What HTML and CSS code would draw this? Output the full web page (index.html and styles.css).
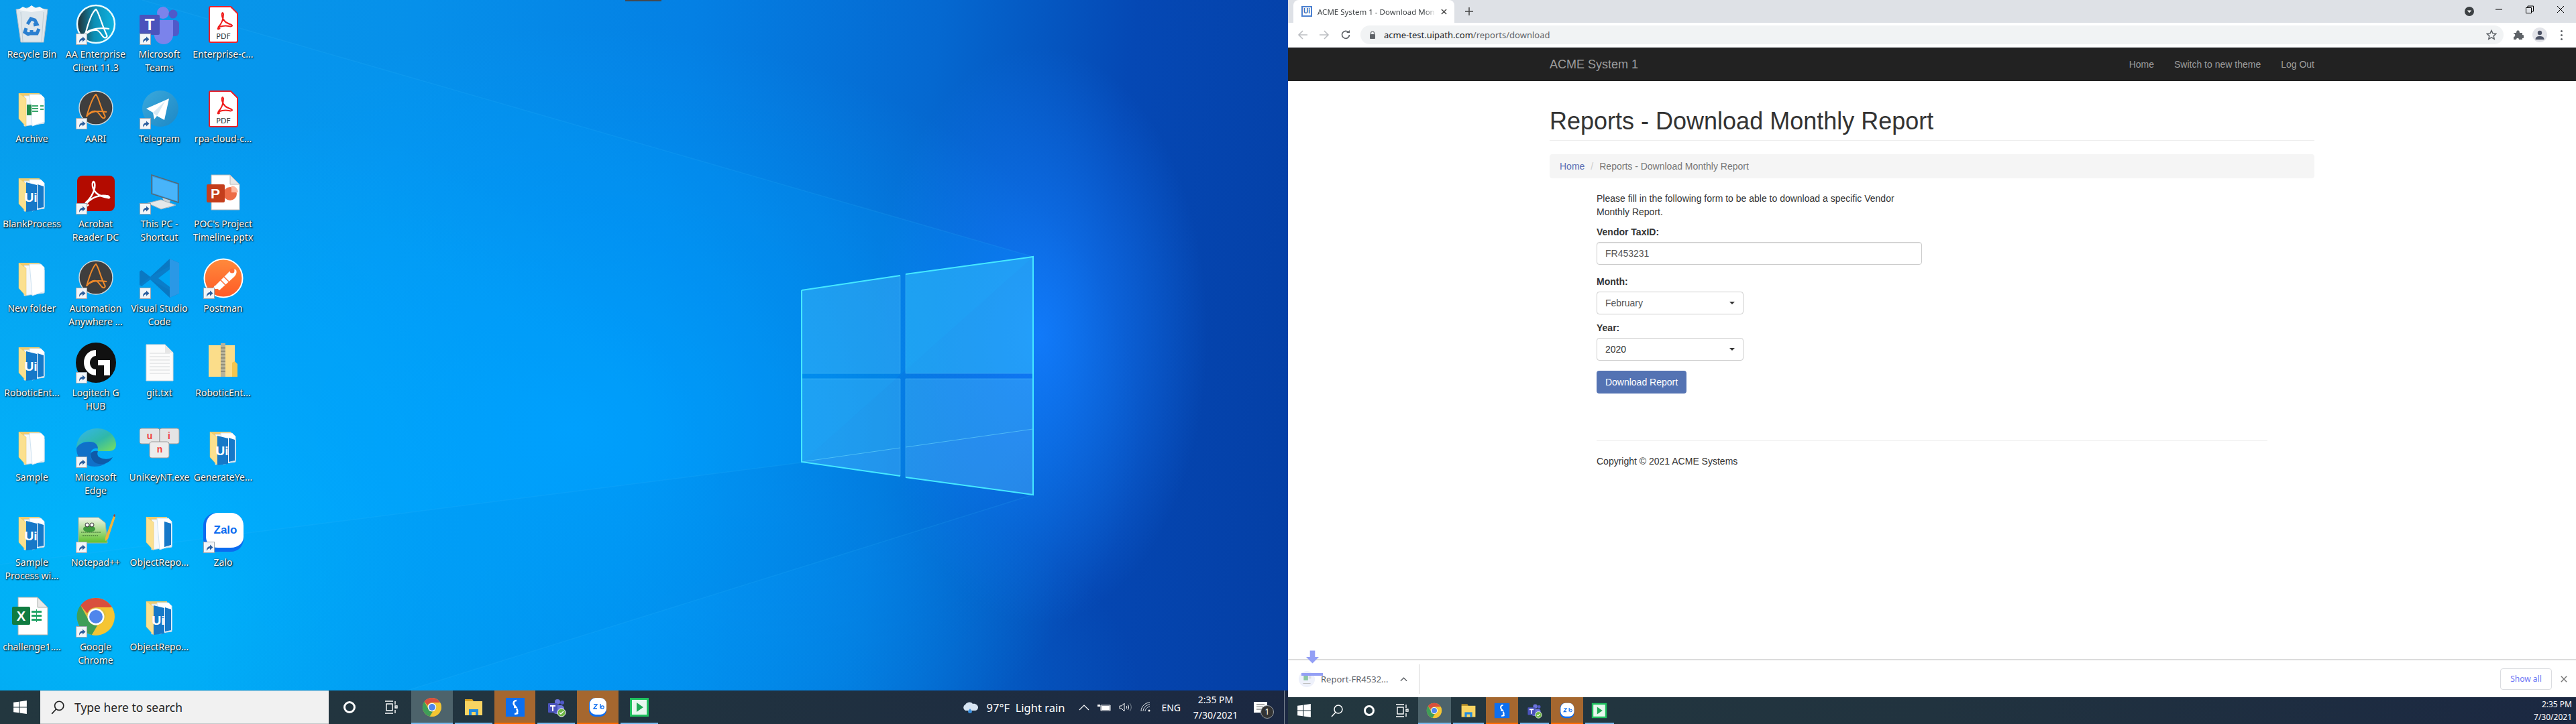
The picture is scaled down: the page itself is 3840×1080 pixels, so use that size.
FILE: index.html
```html
<!DOCTYPE html>
<html lang="en">

<head>
    <meta charset="UTF-8">
    <meta name="viewport" content="width=device-width, initial-scale=1.0">
    <link rel="stylesheet" href="styles.css">
    <title>ACME System 1 - Download Monthly Report</title>
</head>

<body>
    <!-- icon sheet -->
    <svg class="sheet" xmlns="http://www.w3.org/2000/svg">
        <defs>
            <linearGradient id="gAA" x1="0" x2="1" y1="0" y2="0">
                <stop offset="0" stop-color="#222c30" />
                <stop offset=".45" stop-color="#0d8eb4" />
                <stop offset="1" stop-color="#0db4e4" />
            </linearGradient>
            <linearGradient id="gTg" x1="0" x2="1" y1="0" y2="1">
                <stop offset="0" stop-color="#3aa9dd" />
                <stop offset="1" stop-color="#1e88c4" />
            </linearGradient>
            <linearGradient id="gPm" x1="0" x2="0" y1="0" y2="1">
                <stop offset="0" stop-color="#ff8a3c" />
                <stop offset="1" stop-color="#ff5a26" />
            </linearGradient>
            <linearGradient id="gEdge" x1="0" x2="1" y1="0" y2="1">
                <stop offset="0" stop-color="#35b6ef" />
                <stop offset=".55" stop-color="#2fb8a8" />
                <stop offset="1" stop-color="#7be05c" />
            </linearGradient>
            <linearGradient id="gNpp" x1="0" x2="0" y1="0" y2="1">
                <stop offset="0" stop-color="#f2f5e8" />
                <stop offset="1" stop-color="#5cc02c" />
            </linearGradient>
        </defs>

        <symbol id="shortcut" viewBox="0 0 17 17">
            <rect x=".5" y=".5" width="16" height="16" fill="#f2f5f8" stroke="#9aa6b0" />
            <path d="M5 14c0-5 2-7 5-7V4.500l4.500 4-4.500 4V10c-2 0-3.500 1-5 4z" fill="#2d5f9e" />
        </symbol>

        <symbol id="recycle" viewBox="0 0 60 60">
            <path d="M6 8l23-3 24 3-6 49H13z" fill="#dde6ec" stroke="#aebcc6" />
            <path d="M9 9l7-5 6 3 7-5 6 4 6-2 8 5-20 3z" fill="#f6f8f9" />
            <path d="M13 12l3 44M47 12l-3 44" stroke="#bfccd4" />
            <path d="M23 30l5-8 6 2 3 6-5 1M40 37l-3 7-8 0 0-5M21 36l-2 6 5 3 3-1" fill="none" stroke="#2a7fd0" stroke-width="5" />
        </symbol>

        <symbol id="aa" viewBox="0 0 60 60">
            <circle cx="30" cy="30" r="28" fill="url(#gAA)" stroke="#e8fbff" stroke-width="2.500" />
            <path d="M14 46C18 30 24 12 30 8c4 3 9 24 16 38 2 3-2 6-5 3-4-4-5-9-10-10-6-1-12 2-17 7zM12 45c10-9 26-10 38-8" fill="none" stroke="#fff" stroke-width="2.200" />
        </symbol>
        <symbol id="aari" viewBox="0 0 60 60">
            <circle cx="30" cy="29" r="25" fill="#3e3e3e" stroke="#cfd6d8" stroke-width="1.500" />
            <path d="M16 42C20 28 25 13 30 9c4 4 7 20 13 31 2 3-1 6-4 3-4-4-5-8-9-9-5-1-10 2-14 8zM16 41c8-8 18-8 30-6" fill="none" stroke="#f08a2a" stroke-width="2" />
        </symbol>
        <symbol id="teams" viewBox="0 0 60 60">
            <circle cx="35" cy="13" r="9" fill="#7b83eb" />
            <circle cx="50" cy="15" r="6.500" fill="#5059c9" />
            <rect x="43" y="24" width="16" height="24" rx="6" fill="#5059c9" />
            <path d="M22 24h28v22a14 14 0 0 1-28 0z" fill="#7b83eb" />
            <rect x="0" y="16" width="30" height="30" rx="2" fill="#4b53bc" />
        </symbol>
        <symbol id="pdf" viewBox="0 0 60 60">
            <path d="M9 6a2 2 0 0 1 2-2h30l10 10v41a2 2 0 0 1-2 2H11a2 2 0 0 1-2-2z" fill="#fff" stroke="#e8202a" stroke-width="2" />
            <path d="M22 35c6-6 8-14 8-20-1-4-3-1-2 3 2 8 6 10 14 13 3 2-1 3-4 2-6-1-14 0-16 3-1 2 1 2 3 0" fill="none" stroke="#f01c1c" stroke-width="2" />
        </symbol>
        <symbol id="folder" viewBox="0 0 60 60">
            <rect x="10" y="7" width="31" height="9" fill="#efcb6c" />
            <path d="M18 11h22l8 7v34l-30 4z" fill="#f5f8fb" stroke="#cfdbe4" />
            <path d="M26 9l17 0 5 5v36l-18 6z" fill="#fff" stroke="#cfe3f2" />
            <path d="M10 7l11 8v42L10 45z" fill="#fbe08e" stroke="#e8c25e" stroke-width=".5" />
        </symbol>
        <symbol id="folder-xl" viewBox="0 0 60 60">
            <use href="#folder" width="60" height="60" />
            <rect x="22" y="24" width="7" height="16" fill="#1f8a4c" />
            <path d="M30 26h9M30 30h9M30 34h9M42 26h5M42 31h5" stroke="#3aa76d" stroke-width="2" />
        </symbol>
        <symbol id="folder-ui" viewBox="0 0 60 60">
            <use href="#folder" width="60" height="60" />
            <path d="M21 13l16 4v38l-16 2z" fill="#1678c8" />
            <path d="M38 16l9 3v31l-9 2z" fill="#1678c8" />
        </symbol>
        <symbol id="folder-ob" viewBox="0 0 60 60">
            <use href="#folder" width="60" height="60" />
            <path d="M37 14l10 3v32l-10 3z" fill="#1678c8" />
        </symbol>
        <symbol id="acrobat" viewBox="0 0 60 60">
            <rect x="2" y="3" width="56" height="53" rx="8" fill="#b30b00" />
            <path d="M14 44c10-8 16-22 14-30-2-5-4 0-3 5 2 9 9 15 23 17 4 1 2-3-3-3-9-1-19 2-26 8-6 6-3 9 0 5" fill="none" stroke="#fff" stroke-width="2.500" />
        </symbol>
        <symbol id="pc" viewBox="0 0 60 60">
            <path d="M18 2l40 13v28L18 30z" fill="#2ea0ec" stroke="#5b6770" stroke-width="1.500" />
            <path d="M20 5l36 11v25L20 29z" fill="#48b4fa" />
            <path d="M34 36l12 4-2 6 8 2-10 3-12-4 8-2z" fill="#c8d2d8" />
            <path d="M12 44l20-5 22 8-22 6z" fill="#e4e8ea" stroke="#aab4ba" />
        </symbol>
        <symbol id="pptx" viewBox="0 0 60 60">
            <path d="M12 2h28l14 14v38H12z" fill="#fff" stroke="#b8b8b8" />
            <path d="M40 2v14h14z" fill="#e8e8e8" stroke="#b8b8b8" />
            <circle cx="40" cy="30" r="10" fill="#ed6c47" />
            <path d="M42 18a10 10 0 0 1 10 10H42z" fill="#ffb8a0" />
            <rect x="5" y="16" width="27" height="27" rx="2" fill="#c43e1c" />
        </symbol>
        <symbol id="vscode" viewBox="0 0 60 60">
            <path d="M45 1L16 28 3 18 0 20v20l3 2 13-10 29 27 14-6V7z" fill="#0a78c2" />
            <path d="M45 1l14 6v46l-14 6z" fill="#2a98e6" />
            <path d="M16 28l29-16v36L16 32 3 42 0 40z" fill="#0a84d4" opacity=".4" />
            <path d="M28 30l17-13v26z" fill="#00a4f4" />
        </symbol>
        <symbol id="postman" viewBox="0 0 60 60">
            <circle cx="30" cy="30" r="28.500" fill="url(#gPm)" stroke="#fff" stroke-width="2" />
            <path d="M17 42l22-22c4-4 9-4 10-2s1 6-3 10L24 48z" fill="#fff" />
            <path d="M14 46l3-5 5 5z" fill="#fff" />
            <path d="M25 32l8 8M30 27l8 8" stroke="#ff6c37" stroke-width="1.500" />
            <circle cx="43" cy="19" r="3.500" fill="#ff6c37" />
        </symbol>
        <symbol id="logitech" viewBox="0 0 60 60">
            <circle cx="30" cy="30" r="30" fill="#111" />
            <path d="M30 11C19 11 12 20 12 30s8 19 18 19v-9c-6 0-9-5-9-10s4-10 9-10z" fill="#fff" />
            <path d="M33 26h18v23h-9V34h-9z" fill="#fff" />
        </symbol>
        <symbol id="txt" viewBox="0 0 60 60">
            <path d="M10 3h28l12 12v42H10z" fill="#fbfbfb" stroke="#d8d8d8" />
            <path d="M38 3v12h12z" fill="#e6e6e6" />
            <path d="M15 16h30M15 21h30M15 26h30M15 31h30M15 36h30M15 41h30M15 46h30" stroke="#d8dadc" stroke-width="1.200" />
        </symbol>
        <symbol id="zip" viewBox="0 0 60 60">
            <rect x="8" y="4" width="39" height="47" fill="#fbdd8a" />
            <path d="M47 28l4 4v19h-8V30z" fill="#f3c64f" />
            <rect x="26" y="1" width="7" height="50" fill="#b8b39a" />
            <path d="M26 8h7M26 13h7M26 18h7M26 23h7M26 28h7M26 33h7M26 38h7M26 43h7" stroke="#6f6c5c" />
        </symbol>
        <symbol id="edge" viewBox="0 0 60 60">
            <path d="M1 32C1 14 15 2 32 2c16 0 28 11 28 24 0 8-6 10-12 10H33c0-7-3-12-12-14C13 21 5 24 1 32z" fill="url(#gEdge)" />
            <path d="M1 32c0 15 12 27 27 27 9 0 14-3 17-5-16 3-25-6-23-14 1-8 7-9 11-8 0-4-3-10-12-10C12 22 4 25 1 32z" fill="#1070c8" />
            <path d="M22 40c-1 10 10 19 23 14 5-2 8-5 10-9-7 4-13 3-18 1-6-2-5-8-4-10-6-1-10 1-11 4z" fill="#0f5aa8" />
        </symbol>
        <symbol id="unikey" viewBox="0 0 60 60">
            <rect x="0" y="2" width="30" height="23" rx="3" fill="#e4e4e4" stroke="#9a9a9a" />
            <rect x="30" y="2" width="29" height="23" rx="3" fill="#e4e4e4" stroke="#9a9a9a" />
            <rect x="15" y="22" width="29" height="24" rx="3" fill="#ececec" stroke="#9a9a9a" />
        </symbol>
        <symbol id="npp" viewBox="0 0 60 60">
            <path d="M4 8h30l10 8 3 30-43 0z" fill="url(#gNpp)" stroke="#a8b4a0" />
            <path d="M44 38L56 6l3 1-11 33-4 3z" fill="#f0b43c" />
            <path d="M56 6l1-3 2 1-1 3z" fill="#b04030" />
            <ellipse cx="20" cy="25" rx="9" ry="5" fill="#3f9a3c" />
            <circle cx="17" cy="19" r="3" fill="#fff" stroke="#333" />
            <circle cx="24" cy="19" r="3" fill="#fff" stroke="#333" />
            <path d="M8 30h30M10 35h24" stroke="#2e5d2a" stroke-dasharray="2 1" />
        </symbol>
        <symbol id="zalo" viewBox="0 0 60 60">
            <path d="M20 1h21c11 0 19 8 19 19v20c0 11-8 19-19 19H20C9 59 0 50 0 40V20C0 9 9 1 20 1z" fill="#0b6cf0" />
            <path d="M22 1h19c11 0 19 8 19 19v17c0 9-8 16-19 16H22C12 53 4 46 4 37V20C4 9 12 1 22 1z" fill="#fff" />
        </symbol>
        <symbol id="excel" viewBox="0 0 60 60">
            <path d="M9 1h29l15 15v41H9z" fill="#fff" stroke="#aab0ac" />
            <path d="M38 1v15h15z" fill="#e8e8e8" stroke="#aab0ac" />
            <rect x="0" y="15" width="27" height="27" rx="2" fill="#107c41" />
            <path d="M29 21h15v3H29zM29 27h15v3H29zM29 33h15v3H29zM36 19h1v19h-1z" fill="#21a366" />
        </symbol>
        <symbol id="chrome" viewBox="0 0 60 60">
            <circle cx="30" cy="30" r="28" fill="#e0c03f" />
            <path d="M30 2a28 28 0 0 1 24 14H30a14 14 0 0 0-13 9L7 13A28 28 0 0 1 30 2z" fill="#d94f3d" />
            <path d="M7 13l11 20a13 13 0 0 0 14 10l-8 14A28 28 0 0 1 7 13z" fill="#3f9e58" />
            <path d="M54 16a28 28 0 0 1-30 41l10-15 a14 14 0 0 0 8-22 l-12-4z" fill="#f5c533" />
            <circle cx="30" cy="30" r="12.500" fill="#fff" />
            <circle cx="30" cy="30" r="10" fill="#4f86ec" />
        </symbol>
        <symbol id="explorer" viewBox="0 0 30 30">
            <path d="M2 3h11l2 3H2z" fill="#d9a21e" />
            <rect x="2" y="6" width="26" height="21" fill="#f8d462" />
            <rect x="8" y="18" width="14" height="9" fill="#1f8ae0" />
            <rect x="12" y="22" width="6" height="5" fill="#f8d462" />
        </symbol>
        <symbol id="sapp" viewBox="0 0 30 30">
            <rect x="1" y="1" width="28" height="28" fill="#0c6ff0" />
            <path d="M17 5c-4 0-5 3-4 6l3 4-3 0M14 25c4 0 5-3 4-6l-1-2" fill="none" stroke="#fff" stroke-width="2.600" />
            <circle cx="18" cy="24" r="1.600" fill="#fff" />
        </symbol>
        <symbol id="teams-bar" viewBox="0 0 30 30">
            <circle cx="17" cy="7" r="4" fill="#6d75dc" />
            <circle cx="24" cy="8" r="3" fill="#5059c9" />
            <rect x="10" y="12" width="17" height="13" rx="5" fill="#6d75dc" />
            <rect x="3" y="9" width="14" height="14" rx="1" fill="#4b53bc" />
            <path d="M6 12h8v2h-3v7H9v-7H6z" fill="#fff" />
            <circle cx="23" cy="23" r="6" fill="#6eb544" stroke="#fff" />
            <path d="M20 23l2 2 4-4" fill="none" stroke="#fff" stroke-width="1.400" />
        </symbol>
        <symbol id="zalo-bar" viewBox="0 0 30 30">
            <rect x="2" y="1" width="26" height="28" rx="9" fill="#0b6cf0" />
            <rect x="3" y="1" width="25" height="25" rx="9" fill="#fff" />
            <path d="M9 11h5l-5 6h5M19 10v7" fill="none" stroke="#0b6cf0" stroke-width="1.400" />
            <circle cx="22" cy="15" r="2.200" fill="none" stroke="#0b6cf0" stroke-width="1.200" />
        </symbol>
        <symbol id="player" viewBox="0 0 30 30">
            <rect x="1" y="1" width="28" height="28" fill="#1fc05e" />
            <rect x="4" y="4" width="22" height="22" fill="#e8f7ee" />
            <path d="M11 8l10 7-10 7z" fill="#1fa854" />
        </symbol>
        <symbol id="winlogo" viewBox="0 0 20 20">
            <path d="M1 3.500l7.500-1v7H1zM9.500 2.300L19 1v8.500H9.500zM1 10.500h7.500v7l-7.500-1zM9.500 10.500H19V19l-9.500-1.300z" fill="#fff" />
        </symbol>
        <symbol id="lens" viewBox="0 0 20 20">
            <circle cx="12" cy="8" r="6" fill="none" stroke="currentColor" stroke-width="1.500" />
            <path d="M8 12.500L2 19" stroke="currentColor" stroke-width="1.500" />
        </symbol>
        <symbol id="taskview" viewBox="0 0 20 20">
            <path d="M1 1h12M1 19h12M3 5h9v10H3zM16 1v5M16 8h3v3h-3zM16 14v5" fill="none" stroke="#fff" stroke-width="1.400" />
        </symbol>
    </svg>

    <div class="screen">
        <!-- left monitor -->
        <section class="desktop">
            <svg class="wall" viewBox="0 0 1920 1030" preserveAspectRatio="none">
                <polygon class="beam-up" points="1540,383 212,0 0,0 0,842 1195,690" />
                <polygon class="beam-floor" points="1195,690 0,842 0,1030 607,1030 1540,738" />
                <polyline class="beam-line" points="1540,383 212,0" />
                <polyline class="beam-line" points="1195,690 0,842" />
                <polyline class="beam-line" points="1540,738 607,1030" />
                <polygon class="pane" points="1195,433 1342,411 1342,557 1195,557" />
                <polygon class="pane pane-lit" points="1350,409 1540,383 1540,557 1350,557" />
                <polygon class="pane" points="1195,565 1342,565 1342,710 1195,689" />
                <polygon class="pane" points="1350,565 1540,565 1540,738 1350,712" />
                <polygon class="pane-low" points="1195,689 1342,668 1342,710" />
                <polygon class="pane-low" points="1350,667 1540,640 1540,738 1350,712" />
                <polyline class="pane-shine" points="1195,689 1342,668" />
                <polyline class="pane-shine" points="1350,667 1540,640" />
                <path class="pane-edge" d="M1195,433V689L1342,710M1195,433L1342,411M1350,409L1540,383V738L1350,712" />
            </svg>
            <div class="top-notch"></div>

            <div class="icons">
                <div class="item"><span class="icon"><svg viewBox="0 0 60 60"><use href="#recycle" /></svg></span><span class="label">Recycle Bin</span></div>
                <div class="item"><span class="icon"><svg viewBox="0 0 60 60"><use href="#aa" /></svg><svg class="sc"><use href="#shortcut" /></svg></span><span class="label">AA Enterprise<br>Client 11.3</span></div>
                <div class="item"><span class="icon"><svg viewBox="0 0 60 60"><use href="#teams" /><text class="svg-bold" x="15" y="39" font-size="24" text-anchor="middle" fill="#fff">T</text></svg><svg class="sc"><use href="#shortcut" /></svg></span><span class="label">Microsoft<br>Teams</span></div>
                <div class="item"><span class="icon"><svg viewBox="0 0 60 60"><use href="#pdf" /><text class="svg-mono" x="30" y="52" font-size="11" text-anchor="middle" fill="#333">PDF</text></svg></span><span class="label">Enterprise-c...</span></div>

                <div class="item"><span class="icon"><svg viewBox="0 0 60 60"><use href="#folder-xl" /></svg></span><span class="label">Archive</span></div>
                <div class="item"><span class="icon"><svg viewBox="0 0 60 60"><use href="#aari" /></svg><svg class="sc"><use href="#shortcut" /></svg></span><span class="label">AARI</span></div>
                <div class="item"><span class="icon"><svg viewBox="0 0 60 60"><circle cx="31" cy="30" r="27" fill="url(#gTg)" /><path d="M10 30l34-15-7 32-11-6-4 5-2-10z" fill="#fff" /><path d="M20 36l18-17-12 22z" fill="#d4e8f4" /></svg><svg class="sc"><use href="#shortcut" /></svg></span><span class="label">Telegram</span></div>
                <div class="item"><span class="icon"><svg viewBox="0 0 60 60"><use href="#pdf" /><text class="svg-mono" x="30" y="52" font-size="11" text-anchor="middle" fill="#333">PDF</text></svg></span><span class="label">rpa-cloud-c...</span></div>

                <div class="item"><span class="icon"><svg viewBox="0 0 60 60"><use href="#folder-ui" /><text class="svg-bold" x="28" y="42" font-size="19" text-anchor="middle" fill="#fff">Ui</text></svg></span><span class="label">BlankProcess</span></div>
                <div class="item"><span class="icon"><svg viewBox="0 0 60 60"><use href="#acrobat" /></svg><svg class="sc"><use href="#shortcut" /></svg></span><span class="label">Acrobat<br>Reader DC</span></div>
                <div class="item"><span class="icon"><svg viewBox="0 0 60 60"><use href="#pc" /></svg><svg class="sc"><use href="#shortcut" /></svg></span><span class="label">This PC -<br>Shortcut</span></div>
                <div class="item"><span class="icon"><svg viewBox="0 0 60 60"><use href="#pptx" /><text class="svg-bold" x="18" y="37" font-size="21" text-anchor="middle" fill="#fff">P</text></svg></span><span class="label">POC's Project<br>Timeline.pptx</span></div>

                <div class="item"><span class="icon"><svg viewBox="0 0 60 60"><use href="#folder" /></svg></span><span class="label">New folder</span></div>
                <div class="item"><span class="icon"><svg viewBox="0 0 60 60"><use href="#aari" /></svg><svg class="sc"><use href="#shortcut" /></svg></span><span class="label">Automation<br>Anywhere ...</span></div>
                <div class="item"><span class="icon"><svg viewBox="0 0 60 60"><use href="#vscode" /></svg><svg class="sc"><use href="#shortcut" /></svg></span><span class="label">Visual Studio<br>Code</span></div>
                <div class="item"><span class="icon"><svg viewBox="0 0 60 60"><use href="#postman" /></svg><svg class="sc"><use href="#shortcut" /></svg></span><span class="label">Postman</span></div>

                <div class="item"><span class="icon"><svg viewBox="0 0 60 60"><use href="#folder-ui" /><text class="svg-bold" x="28" y="42" font-size="19" text-anchor="middle" fill="#fff">Ui</text></svg></span><span class="label">RoboticEnt...</span></div>
                <div class="item"><span class="icon"><svg viewBox="0 0 60 60"><use href="#logitech" /></svg><svg class="sc"><use href="#shortcut" /></svg></span><span class="label">Logitech G<br>HUB</span></div>
                <div class="item"><span class="icon"><svg viewBox="0 0 60 60"><use href="#txt" /></svg></span><span class="label">git.txt</span></div>
                <div class="item"><span class="icon"><svg viewBox="0 0 60 60"><use href="#zip" /></svg></span><span class="label">RoboticEnt...</span></div>

                <div class="item"><span class="icon"><svg viewBox="0 0 60 60"><use href="#folder" /></svg></span><span class="label">Sample</span></div>
                <div class="item"><span class="icon"><svg viewBox="0 0 60 60"><use href="#edge" /></svg><svg class="sc"><use href="#shortcut" /></svg></span><span class="label">Microsoft<br>Edge</span></div>
                <div class="item"><span class="icon"><svg viewBox="0 0 60 60"><use href="#unikey" /><text class="svg-bold" x="15" y="18" font-size="14" text-anchor="middle" fill="#f04040">u</text><text class="svg-bold" x="44" y="18" font-size="14" text-anchor="middle" fill="#f04040">i</text><text class="svg-bold" x="30" y="38" font-size="14" text-anchor="middle" fill="#f04040">n</text></svg></span><span class="label">UniKeyNT.exe</span></div>
                <div class="item"><span class="icon"><svg viewBox="0 0 60 60"><use href="#folder-ui" /><text class="svg-bold" x="28" y="42" font-size="19" text-anchor="middle" fill="#fff">Ui</text></svg></span><span class="label">GenerateYe...</span></div>

                <div class="item"><span class="icon"><svg viewBox="0 0 60 60"><use href="#folder-ui" /><text class="svg-bold" x="28" y="42" font-size="19" text-anchor="middle" fill="#fff">Ui</text></svg></span><span class="label">Sample<br>Process wi...</span></div>
                <div class="item"><span class="icon"><svg viewBox="0 0 60 60"><use href="#npp" /></svg><svg class="sc"><use href="#shortcut" /></svg></span><span class="label">Notepad++</span></div>
                <div class="item"><span class="icon"><svg viewBox="0 0 60 60"><use href="#folder-ob" /></svg></span><span class="label">ObjectRepo...</span></div>
                <div class="item"><span class="icon"><svg viewBox="0 0 60 60"><use href="#zalo" /><text class="svg-bold" x="33" y="32" font-size="17" text-anchor="middle" fill="#0b6cf0">Zalo</text></svg><svg class="sc"><use href="#shortcut" /></svg></span><span class="label">Zalo</span></div>

                <div class="item"><span class="icon"><svg viewBox="0 0 60 60"><use href="#excel" /><text class="svg-bold" x="13.500" y="36" font-size="20" text-anchor="middle" fill="#fff">X</text></svg></span><span class="label">challenge1....</span></div>
                <div class="item"><span class="icon"><svg viewBox="0 0 60 60"><use href="#chrome" /></svg><svg class="sc"><use href="#shortcut" /></svg></span><span class="label">Google<br>Chrome</span></div>
                <div class="item"><span class="icon"><svg viewBox="0 0 60 60"><use href="#folder-ui" /><text class="svg-bold" x="28" y="42" font-size="19" text-anchor="middle" fill="#fff">Ui</text></svg></span><span class="label">ObjectRepo...</span></div>
            </div>

            <footer class="taskbar taskbar-big">
                <div class="tb-start"><svg class="tb-win"><use href="#winlogo" /></svg></div>
                <div class="search-box">
                    <svg class="search-lens"><use href="#lens" /></svg>
                    <span>Type here to search</span>
                </div>
                <div class="tb-cell"><span class="cortana"></span></div>
                <div class="tb-cell"><svg class="tb-small"><use href="#taskview" /></svg></div>
                <div class="tb-cell active open"><svg class="tb-app"><use href="#chrome" /></svg></div>
                <div class="tb-cell open"><svg class="tb-app"><use href="#explorer" /></svg></div>
                <div class="tb-cell flash"><svg class="tb-app"><use href="#sapp" /></svg></div>
                <div class="tb-cell open"><svg class="tb-app"><use href="#teams-bar" /></svg></div>
                <div class="tb-cell flash"><svg class="tb-app"><use href="#zalo-bar" /></svg></div>
                <div class="tb-cell open"><svg class="tb-app"><use href="#player" /></svg></div>

                <div class="tray">
                    <svg class="tray-cloud" viewBox="0 0 26 18"><path d="M6 14a5 5 0 0 1 0-9c2-4 9-5 11-1 4-1 8 2 8 5s-2 5-5 5z" fill="#d6e4f2" /><path d="M13 11l3 4a3 3 0 0 1-6 0z" fill="#3a8edc" /></svg>
                    <span class="weather">97°F&nbsp; Light rain</span>
                    <svg class="tray-ico caret-up" viewBox="0 0 16 10"><path d="M1 9l7-7 7 7" fill="none" stroke="#fff" stroke-width="1.200" /></svg>
                    <svg class="tray-ico" viewBox="0 0 20 12"><path d="M5 3h14v8H5z" fill="none" stroke="#fff" /><path d="M6 4h12v6H6zM0 2h4v3H0z" fill="#fff" /></svg>
                    <svg class="tray-ico" viewBox="0 0 20 14"><path d="M1 5h3l4-4v12l-4-4H1zM11 5c1 1 1 3 0 4M13 3c2 2 2 6 0 8" fill="none" stroke="#fff" /><path d="M16 1c3 3 3 9 0 12" fill="none" stroke="#7c8794" /></svg>
                    <svg class="tray-ico wifi" viewBox="0 0 16 16"><path d="M1 14C1 7 7 1 14 1M4 14c0-5 5-10 10-10M7 14c0-3 4-7 7-7" fill="none" stroke="#dfe4e8" /><circle cx="13" cy="13" r="1.500" fill="#fff" /></svg>
                    <span class="lang">ENG</span>
                    <div class="clock"><span>2:35 PM</span><span>7/30/2021</span></div>
                    <div class="notif">
                        <svg class="notif-lines" viewBox="0 0 20 16"><path d="M4 4h12M4 7.500h12M4 11h8" stroke="#555" /></svg>
                        <span class="notif-badge">1</span>
                    </div>
                    <span class="show-desktop"></span>
                </div>
            </footer>
        </section>

        <!-- right monitor: chrome -->
        <section class="browser">
            <div class="tabstrip">
                <div class="tab">
                    <span class="favicon">Ui</span>
                    <span class="tab-title">ACME System 1 - Download Mon</span>
                    <svg class="tab-close" viewBox="0 0 10 10"><path d="M1 1l8 8M9 1L1 9" stroke="#444" stroke-width="1.600" /></svg>
                </div>
                <svg class="new-tab" viewBox="0 0 12 12"><path d="M6 0v12M0 6h12" stroke="#444" stroke-width="1.500" /></svg>
                <div class="win-controls">
                    <svg class="tab-search" viewBox="0 0 14 14"><circle cx="7" cy="7" r="7" fill="#3c4043" /><path d="M3.800 5.500h6.400L7 9.300z" fill="#fff" /></svg>
                    <svg class="win-btn" viewBox="0 0 12 12"><path d="M1 6h10" stroke="#000" /></svg>
                    <svg class="win-btn" viewBox="0 0 12 12"><path d="M.5 3.500h8v8h-8zM3 3.500V1h8.500v8H8.500" fill="none" stroke="#000" /></svg>
                    <svg class="win-btn" viewBox="0 0 12 12"><path d="M1 1l10 10M11 1L1 11" stroke="#000" /></svg>
                </div>
            </div>

            <div class="toolbar">
                <svg class="tool tool-off" viewBox="0 0 16 16"><path d="M15 8H2M8 2L2 8l6 6" fill="none" stroke="currentColor" stroke-width="1.600" /></svg>
                <svg class="tool tool-off" viewBox="0 0 16 16"><path d="M1 8h13M8 2l6 6-6 6" fill="none" stroke="currentColor" stroke-width="1.600" /></svg>
                <svg class="tool" viewBox="0 0 16 16"><path d="M13.500 8A5.500 5.500 0 1 1 12 4" fill="none" stroke="currentColor" stroke-width="1.700" /><path d="M9 5h5V1z" fill="currentColor" /></svg>
                <div class="omnibox">
                    <svg class="lock" viewBox="0 0 10 12"><path d="M2.500 5V3.500a2.500 2.500 0 0 1 5 0V5" fill="none" stroke="#5f6368" stroke-width="1.200" /><rect x="1" y="5" width="8" height="7" rx="1" fill="#5f6368" /></svg>
                    <span class="url">acme-test.uipath.com<span class="url-path">/reports/download</span></span>
                    <svg class="star" viewBox="0 0 16 16"><path d="M8 1.500l2 4.400 4.700.5-3.500 3.200 1 4.700L8 11.900l-4.200 2.400 1-4.700L1.300 6.400 6 5.900z" fill="none" stroke="#5f6368" stroke-width="1.500" /></svg>
                </div>
                <svg class="tool ext" viewBox="0 0 16 16"><path d="M1 5h4c0-5 5-5 5 0h4v3c4 0 4 5 0 5v2H9c0-3-4-3-4 0H1v-4c3 0 3-5 0-5z" fill="#5f6368" /></svg>
                <div class="avatar"><svg viewBox="0 0 16 16"><circle cx="8" cy="5" r="3.200" fill="#4d5365" /><path d="M1.500 15c0-4 3-5 6.500-5s6.500 1 6.500 5z" fill="#4d5365" /></svg></div>
                <div class="kebab"><span></span><span></span><span></span></div>
            </div>

            <div class="page">
                <nav class="navbar">
                    <div class="container nav-row">
                        <span class="brand">ACME System 1</span>
                        <div class="nav-links">
                            <a>Home</a>
                            <a>Switch to new theme</a>
                            <a>Log Out</a>
                        </div>
                    </div>
                </nav>
                <main class="container">
                    <h1 class="page-header">Reports - Download Monthly Report</h1>
                    <div class="breadcrumb"><a>Home</a><span class="crumb-sep">/</span><span>Reports - Download Monthly Report</span></div>
                    <div class="form-area">
                        <div class="form-col">
                            <p class="intro">Please fill in the following form to be able to download a specific Vendor Monthly Report.</p>
                            <label>Vendor TaxID:</label>
                            <div class="field field-text">FR453231</div>
                            <label>Month:</label>
                            <div class="field field-select tight">February<span class="caret"></span></div>
                            <label>Year:</label>
                            <div class="field field-select year">2020<span class="caret"></span></div>
                            <div class="btn-primary">Download Report</div>
                        </div>
                        <div class="page-footer">Copyright © 2021 ACME Systems</div>
                    </div>
                </main>
            </div>

            <div class="shelf">
                <div class="dl-item">
                    <svg class="dl-file" viewBox="0 0 28 28"><circle cx="14" cy="14" r="13" fill="#eef1fb" /><rect x="9" y="8" width="7" height="8" fill="#8cc6a4" /><path d="M17 9h4M17 12h4M8 21h12" stroke="#bbb" /></svg>
                    <span class="dl-name">Report-FR4532...</span>
                    <svg class="dl-caret" viewBox="0 0 12 8"><path d="M1 7l5-5 5 5" fill="none" stroke="#5f6368" stroke-width="1.600" /></svg>
                </div>
                <span class="dl-bar"></span>
                <svg class="dl-arrow" viewBox="0 0 20 20"><path d="M6 0h8v10h6L10 20 0 10h6z" fill="#939ff5" /></svg>
                <div class="show-all">Show all</div>
                <svg class="shelf-close" viewBox="0 0 12 12"><path d="M1 1l10 10M11 1L1 11" stroke="#777" stroke-width="1.800" /></svg>
            </div>

            <footer class="taskbar taskbar-small">
                <div class="tb-cell"><svg class="tb-win"><use href="#winlogo" /></svg></div>
                <div class="tb-cell"><svg class="tb-small tb-lens"><use href="#lens" /></svg></div>
                <div class="tb-cell"><span class="cortana"></span></div>
                <div class="tb-cell"><svg class="tb-small"><use href="#taskview" /></svg></div>
                <div class="tb-cell active open"><svg class="tb-app"><use href="#chrome" /></svg></div>
                <div class="tb-cell open tb-gap"><svg class="tb-app"><use href="#explorer" /></svg></div>
                <div class="tb-cell flash"><svg class="tb-app"><use href="#sapp" /></svg></div>
                <div class="tb-cell open"><svg class="tb-app"><use href="#teams-bar" /></svg></div>
                <div class="tb-cell flash"><svg class="tb-app"><use href="#zalo-bar" /></svg></div>
                <div class="tb-cell open"><svg class="tb-app"><use href="#player" /></svg></div>
                <div class="tray">
                    <div class="clock"><span>2:35 PM</span><span>7/30/2021</span></div>
                </div>
            </footer>
        </section>
    </div>
</body>

</html>
```

FILE: styles.css
```css
* {
    margin: 0;
    padding: 0;
    box-sizing: border-box;
}

body {
    width: 3840px;
    height: 1080px;
    overflow: hidden;
    font-family: "Liberation Sans", Arial, sans-serif;
    font-size: 14px;
    color: #333;
    background: #000;
}

.sheet {
    position: absolute;
    width: 0;
    height: 0;
}

.svg-bold {
    font-family: "Liberation Sans", Arial, sans-serif;
    font-weight: bold;
}

.svg-mono {
    font-family: "DejaVu Sans", sans-serif;
}

.screen {
    display: flex;
    width: 3840px;
    height: 1080px;
}

/* desktop */
.desktop {
    position: relative;
    display: flex;
    flex-direction: column;
    width: 1920px;
    height: 1080px;
    background:
        radial-gradient(ellipse 250px 430px at 1550px 500px, rgba(18, 125, 255, .9), rgba(18, 125, 255, 0)),
        radial-gradient(ellipse 850px 600px at 850px 640px, rgba(0, 162, 255, .9), rgba(0, 162, 255, 0)),
        radial-gradient(ellipse 700px 340px at 1000px 1030px, rgba(0, 150, 240, .55), rgba(0, 150, 240, 0)),
        radial-gradient(ellipse 900px 720px at 200px 860px, rgba(0, 190, 255, .95), rgba(0, 190, 255, 0)),
        linear-gradient(98deg, #0a9ce9 0%, #0690ea 30%, #0480e4 50%, #0568d0 68%, #0548b4 82%, #043ea4 100%);
}

.wall {
    position: absolute;
    top: 0;
    left: 0;
    width: 1920px;
    height: 1030px;
}

.beam-up {
    fill: rgba(0, 160, 255, .14);
}

.beam-floor {
    fill: rgba(0, 70, 170, .03);
}

.beam-line {
    fill: none;
    stroke: rgba(60, 190, 255, .14);
    stroke-width: 1.500;
}

.pane {
    fill: rgba(90, 205, 255, .32);
    stroke: rgba(120, 230, 255, .3);
}

.pane-lit {
    fill: rgba(60, 205, 255, .45);
}

.pane-low {
    fill: rgba(90, 120, 255, .07);
}

.pane-shine {
    fill: none;
    stroke: rgba(120, 230, 255, .5);
}

.pane-edge {
    fill: none;
    stroke: #45e8ff;
    stroke-width: 2;
}

.top-notch {
    position: absolute;
    top: 0;
    left: 932px;
    width: 54px;
    height: 2px;
    background: #45484e;
}

.icons {
    position: relative;
    flex: 1;
    display: grid;
    grid-template-columns: repeat(4, 95px);
    grid-auto-rows: 126.300px;
    padding-top: 6px;
}

.item {
    display: flex;
    flex-direction: column;
    align-items: center;
}

.icon {
    position: relative;
    width: 60px;
    height: 60px;
}

.icon svg {
    display: block;
    width: 60px;
    height: 60px;
}

.icon .sc {
    position: absolute;
    left: 0;
    top: 44px;
    width: 17px;
    height: 17px;
}

.label {
    margin-top: 5px;
    font-family: "Noto Sans", sans-serif;
    font-size: 14px;
    line-height: 20px;
    color: #fff;
    text-align: center;
    white-space: nowrap;
    text-shadow: 1px 1px 2px #000, 0 0 2px rgba(0, 0, 0, .7);
}

/* taskbars */
.taskbar {
    position: relative;
    display: flex;
    align-items: stretch;
    background: linear-gradient(90deg, #23373f 0%, #21333f 50%, #1b2842 100%);
    font-family: "Noto Sans", sans-serif;
    color: #fff;
}

.taskbar-big {
    height: 50px;
}

.taskbar-small {
    height: 40px;
}

.tb-start {
    width: 60px;
    display: flex;
    align-items: center;
    justify-content: center;
}

.tb-win {
    width: 22px;
    height: 22px;
}

.search-box {
    width: 430px;
    display: flex;
    align-items: center;
    background: #f1f1f1;
    border-top: 1px solid #c4c8ca;
    border-bottom: 1px solid #c4c8ca;
    color: #222;
    font-size: 17.500px;
}

.search-lens {
    width: 22px;
    height: 22px;
    margin: 0 14px 0 15px;
    color: #222;
}

.tb-cell {
    position: relative;
    width: 61.700px;
    display: flex;
    align-items: center;
    justify-content: center;
}

.taskbar-small .tb-cell {
    width: 48.500px;
}

.taskbar-small .tb-gap {
    width: 52px;
}

.tb-cell.active {
    background: #4d636b;
}

.tb-cell.open::after {
    content: "";
    position: absolute;
    left: 3px;
    right: 3px;
    bottom: 0;
    height: 2px;
    background: #76b9ed;
}

.tb-cell.active::after {
    left: 0;
    right: 0;
}

.tb-cell.flash {
    background: #a5672f;
}

.tb-cell.flash::after {
    content: "";
    position: absolute;
    left: 0;
    right: 0;
    bottom: 0;
    height: 2px;
    background: #ff6a00;
}

.cortana {
    width: 18px;
    height: 18px;
    border: 3px solid #fff;
    border-radius: 50%;
}

.taskbar-small .cortana {
    width: 16px;
    height: 16px;
}

.tb-small {
    width: 20px;
    height: 20px;
}

.tb-lens {
    color: #fff;
}

.tb-app {
    width: 30px;
    height: 30px;
}

.taskbar-small .tb-app {
    width: 24px;
    height: 24px;
}

.tray {
    margin-left: auto;
    display: flex;
    align-items: center;
    gap: 12px;
    font-size: 15px;
}

.tray-cloud {
    width: 26px;
    height: 18px;
}

.weather {
    font-size: 16.500px;
    white-space: nowrap;
    margin-right: 9px;
}

.tray-ico {
    width: 20px;
    height: 14px;
}

.caret-up {
    width: 16px;
}

.wifi {
    width: 16px;
    height: 16px;
}

.lang {
    font-size: 14px;
    margin: 0 4px 0 3px;
}

.clock {
    display: flex;
    flex-direction: column;
    align-items: center;
    width: 72px;
    line-height: 23px;
    font-size: 14px;
}

.notif {
    position: relative;
    width: 20px;
    height: 16px;
    margin: 0 31px 0 9px;
    background: #fff;
}

.notif-lines {
    display: block;
    width: 20px;
    height: 16px;
}

.notif-badge {
    position: absolute;
    right: -10px;
    bottom: -9px;
    width: 20px;
    height: 20px;
    border: 1px solid #9aa0a6;
    border-radius: 50%;
    background: #333;
    font-size: 12px;
    line-height: 18px;
    text-align: center;
}

.show-desktop {
    position: absolute;
    right: 5px;
    top: 0;
    width: 1px;
    height: 100%;
    background: #7c8794;
}

.taskbar-small .tray {
    padding-right: 6px;
}

.taskbar-small .clock {
    width: auto;
    align-items: flex-end;
    font-size: 12px;
    line-height: 19px;
}

/* chrome */
.browser {
    display: flex;
    flex-direction: column;
    width: 1920px;
    height: 1080px;
    background: #fff;
    font-family: "Noto Sans", sans-serif;
}

.tabstrip {
    position: relative;
    display: flex;
    align-items: flex-end;
    height: 34px;
    padding-left: 8px;
    background: #dee1e6;
}

.tab {
    display: flex;
    align-items: center;
    width: 240px;
    height: 34px;
    padding: 0 10px 0 12px;
    background: #fff;
    border-radius: 8px 8px 0 0;
}

.favicon {
    flex: none;
    width: 16px;
    height: 16px;
    border: 2px solid #4b80d0;
    color: #2f67b8;
    font: bold 10px/12px "Liberation Sans", sans-serif;
    text-align: center;
}

.tab-title {
    flex: 1;
    min-width: 0;
    margin-left: 8px;
    white-space: nowrap;
    font-size: 11.500px;
    color: #3c4043;
    -webkit-mask-image: linear-gradient(90deg, #000 90%, transparent 100%);
    mask-image: linear-gradient(90deg, #000 90%, transparent 100%);
}

.tab-close {
    flex: none;
    width: 9px;
    height: 9px;
    margin-left: 7px;
    margin-right: 1px;
}

.new-tab {
    align-self: center;
    width: 12px;
    height: 12px;
    margin-left: 16px;
}

.win-controls {
    position: absolute;
    top: 0;
    right: 0;
    display: flex;
    align-items: flex-start;
}

.tab-search {
    width: 14px;
    height: 14px;
    margin: 10px 14px 0 0;
}

.win-btn {
    width: 12px;
    height: 12px;
    margin: 8px 17px 0;
}

.toolbar {
    display: flex;
    align-items: center;
    height: 36px;
    border-bottom: 1px solid #dadce0;
    box-sizing: content-box;
    padding-left: 14px;
}

.tool {
    width: 16px;
    height: 16px;
    margin-right: 16px;
    color: #5f6368;
}

.tool-off {
    color: #bcbec2;
}

.omnibox {
    display: flex;
    align-items: center;
    width: 1704px;
    height: 28px;
    margin-left: -2px;
    padding: 0 10px 0 13px;
    border-radius: 14px;
    background: #f1f3f4;
}

.lock {
    width: 10px;
    height: 12px;
}

.url {
    flex: 1;
    margin-left: 12px;
    font-size: 13px;
    color: #202124;
}

.url-path {
    color: #5f6368;
}

.star {
    width: 16px;
    height: 16px;
}

.ext {
    margin: 0 13px 0 14px;
}

.avatar {
    width: 22px;
    height: 22px;
    padding: 3px;
    border-radius: 50%;
    background: #e3e4e9;
}

.avatar svg {
    display: block;
}

.kebab {
    display: flex;
    flex-direction: column;
    gap: 3px;
    margin-left: 20px;
}

.kebab span {
    width: 3px;
    height: 3px;
    border-radius: 50%;
    background: #5f6368;
}

.page {
    flex: 1;
    min-height: 0;
    font-family: "Liberation Sans", Arial, sans-serif;
}

.container {
    width: 1170px;
    margin: 0 auto;
    padding: 0 15px;
}

.navbar {
    height: 50px;
    background: #222;
    color: #9d9d9d;
}

.nav-row {
    display: flex;
    align-items: center;
    justify-content: space-between;
    height: 50px;
}

.brand {
    font-size: 18px;
}

.nav-links {
    display: flex;
    gap: 30px;
}

.page-header {
    margin: 40px 0 20px;
    padding-bottom: 8px;
    border-bottom: 1px solid #eee;
    font-size: 36px;
    font-weight: 500;
    line-height: 1.100;
}

.breadcrumb {
    height: 36px;
    padding: 8px 15px;
    border-radius: 4px;
    background: #f5f5f5;
    line-height: 20px;
    color: #777;
}

.breadcrumb a {
    color: #5a6fb4;
}

.crumb-sep {
    padding: 0 9px;
    color: #ccc;
}

.form-area {
    padding: 20px 0 0 70px;
}

.form-col {
    width: 485px;
}

.intro {
    margin-bottom: 10px;
    line-height: 20px;
}

label {
    display: block;
    margin-bottom: 5px;
    font-weight: bold;
    line-height: 20px;
}

.field {
    display: flex;
    align-items: center;
    height: 34px;
    padding: 0 12px;
    border: 1px solid #ccc;
    border-radius: 4px;
    box-shadow: inset 0 1px 1px rgba(0, 0, 0, .075);
    background: #fff;
    color: #555;
}

.field-text {
    margin-bottom: 15px;
}

.field-select {
    justify-content: space-between;
    width: 219px;
    box-shadow: none;
}

.tight {
    margin-bottom: 10px;
}

.year {
    margin-bottom: 15px;
    color: #333;
}

.caret {
    width: 0;
    height: 0;
    border-top: 4px solid #333;
    border-left: 4px solid transparent;
    border-right: 4px solid transparent;
}

.btn-primary {
    width: 134px;
    height: 34px;
    border-radius: 4px;
    background: #5473b3;
    color: #fff;
    line-height: 34px;
    text-align: center;
}

.page-footer {
    width: 1000px;
    margin-top: 70px;
    padding-top: 20px;
    border-top: 1px solid #eee;
    line-height: 20px;
}

/* download shelf */
.shelf {
    position: relative;
    display: flex;
    align-items: center;
    height: 57px;
    border-top: 2px solid #dcdcdc;
    background: #fff;
}

.dl-item {
    display: flex;
    align-items: center;
    width: 196px;
    height: 44px;
    padding-left: 15px;
    border-right: 1px solid #d4d4d4;
}

.dl-file {
    width: 26px;
    height: 26px;
}

.dl-name {
    margin-left: 8px;
    width: 110px;
    font-size: 13px;
    color: #5f6368;
    white-space: nowrap;
}

.dl-caret {
    width: 11px;
    height: 8px;
    margin-left: 8px;
}

.dl-bar {
    position: absolute;
    left: 20px;
    top: 19px;
    width: 32px;
    height: 4px;
    background: #939ff5;
}

.dl-arrow {
    position: absolute;
    left: 27px;
    top: -15px;
    width: 19px;
    height: 20px;
}

.show-all {
    width: 77px;
    height: 32px;
    margin-left: auto;
    border: 1px solid #dadce0;
    border-radius: 4px;
    color: #6b75f5;
    font-size: 12px;
    line-height: 30px;
    text-align: center;
}

.shelf-close {
    width: 10px;
    height: 10px;
    margin: 0 13px 0 13px;
}
```
